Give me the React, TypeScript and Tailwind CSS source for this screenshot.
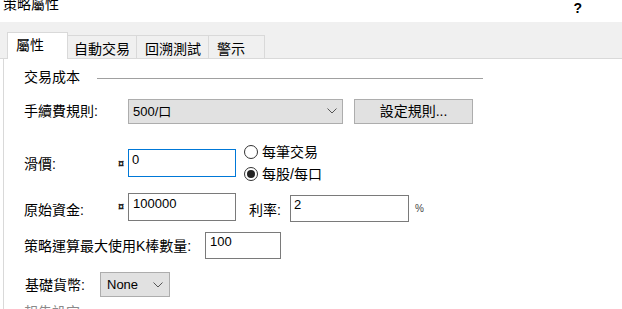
import React from "react";

const F = { fontFamily: '"Liberation Sans", "Noto Sans CJK TC", sans-serif' };

function Chevron({ className = "" }: { className?: string }) {
  return (
    <svg width="10" height="6" viewBox="0 0 10 6" className={className}>
      <path d="M0.5 0.5 L5 5 L9.5 0.5" fill="none" stroke="#555" strokeWidth="1" />
    </svg>
  );
}

export default function App() {
  return (
    <div
      className="w-[622px] h-[309px] overflow-hidden bg-white text-black flex flex-col"
      style={F}
    >
      {/* title bar */}
      <div className="h-[22px] flex items-start shrink-0">
        <div className="pl-[3px] text-[14px] leading-[14px] -mt-[3px]">策略屬性</div>
        <div className="flex-1" />
        <div className="mr-[40px] mt-[1px] text-[14px] leading-[14px] font-semibold">?</div>
      </div>

      {/* tab strip */}
      <div className="h-[37px] shrink-0 bg-[#f0f0f0] border-b border-[#d9d9d9] flex items-end pl-[7px] text-[14px]">
        <div className="relative z-10 w-[61px] h-[27px] -mb-[1px] bg-white border border-b-0 border-[#d9d9d9] pl-[8px] pt-[5px] leading-[14px]">
          屬性
        </div>
        <div className="w-[69px] h-[23px] border-t border-r border-[#d9d9d9] pl-[6px] pt-[6px] leading-[14px]">
          自動交易
        </div>
        <div className="w-[72px] h-[23px] border-t border-r border-[#d9d9d9] pl-[8px] pt-[6px] leading-[14px]">
          回溯測試
        </div>
        <div className="w-[56px] h-[23px] border-t border-r border-[#d9d9d9] pl-[8px] pt-[6px] leading-[14px]">
          警示
        </div>
      </div>

      {/* content */}
      <div className="flex-1 ml-[3px] border-l border-[#d9d9d9] pl-[20px] flex flex-col text-[14px]">
        {/* group header */}
        <div className="mt-[8px] h-[20px] flex items-center">
          <span className="leading-[14px]">交易成本</span>
          <div className="ml-[17px] w-[386px] h-px bg-[#a0a0a0] mt-[2px]" />
        </div>

        {/* 手續費規則 */}
        <div className="mt-[11px] h-[26px] flex items-center">
          <span className="w-[104px] leading-[14px]">手續費規則:</span>
          <div className="w-[215px] h-[25px] bg-[#e1e1e1] border border-[#adadad] flex items-center pl-[4px] pr-[5px]">
            <span className="text-[13px] leading-[13px] flex-1">500/口</span>
            <Chevron />
          </div>
          <div className="ml-[11px] w-[119px] h-[25px] bg-[#e1e1e1] border border-[#adadad] flex items-center justify-center">
            <span className="leading-[14px] -mt-[1px]">設定規則...</span>
          </div>
        </div>

        {/* 滑價 */}
        <div className="mt-[21px] h-[36px] flex items-center">
          <span className="w-[94px] leading-[14px] mt-[2px]">滑價:</span>
          <span className="w-[10px] text-[11px] leading-[11px] font-bold text-[#222]">¤</span>
          <div className="w-[108px] h-[28px] border border-[#0078d7] pl-[3px] pt-[3px] text-[13px] leading-[13px]">
            0
          </div>
          <div className="ml-[8px] flex flex-col gap-[8px] -mt-[1px]">
            <div className="flex items-center">
              <div className="w-[14px] h-[14px] rounded-full border border-[#333] bg-white" />
              <span className="ml-[4px] leading-[14px]">每筆交易</span>
            </div>
            <div className="flex items-center">
              <div className="w-[14px] h-[14px] rounded-full border border-[#333] bg-white flex items-center justify-center">
                <div className="w-[8px] h-[8px] rounded-full bg-[#222]" />
              </div>
              <span className="ml-[4px] leading-[14px]">每股/每口</span>
            </div>
          </div>
        </div>

        {/* 原始資金 */}
        <div className="mt-[12px] h-[29px] flex items-start">
          <span className="w-[94px] leading-[14px] mt-[10px]">原始資金:</span>
          <span className="w-[10px] text-[11px] leading-[11px] font-bold text-[#222] mt-[8px]">¤</span>
          <div className="w-[108px] h-[28px] border border-[#7a7a7a] pl-[4px] pt-[3px] text-[13px] leading-[13px]">
            100000
          </div>
          <span className="ml-[13px] leading-[14px] mt-[10px]">利率:</span>
          <div className="ml-[9px] mt-[2px] w-[119px] h-[27px] border border-[#7a7a7a] pl-[3px] pt-[2px] text-[13px] leading-[13px]">
            2
          </div>
          <span className="ml-[6px] mt-[11px] text-[10px] leading-[10px] text-[#444]">%</span>
        </div>

        {/* K棒數量 */}
        <div className="mt-[10px] h-[27px] flex items-center">
          <span className="w-[181px] leading-[14px]">策略運算最大使用K棒數量:</span>
          <div className="w-[76px] h-[27px] border border-[#7a7a7a] pl-[4px] pt-[2px] text-[13px] leading-[13px]">
            100
          </div>
        </div>

        {/* 基礎貨幣 */}
        <div className="mt-[13px] h-[25px] flex items-center">
          <span className="w-[76px] leading-[14px] pl-[1px]">基礎貨幣:</span>
          <div className="w-[70px] h-[25px] bg-[#e1e1e1] border border-[#adadad] flex items-center pl-[6px] pr-[6px]">
            <span className="text-[13px] leading-[13px] flex-1">None</span>
            <Chevron />
          </div>
        </div>

        {/* partially visible */}
        <div className="mt-[8px] leading-[14px] text-[#8a8a8a]">報告設定</div>
      </div>
    </div>
  );
}
